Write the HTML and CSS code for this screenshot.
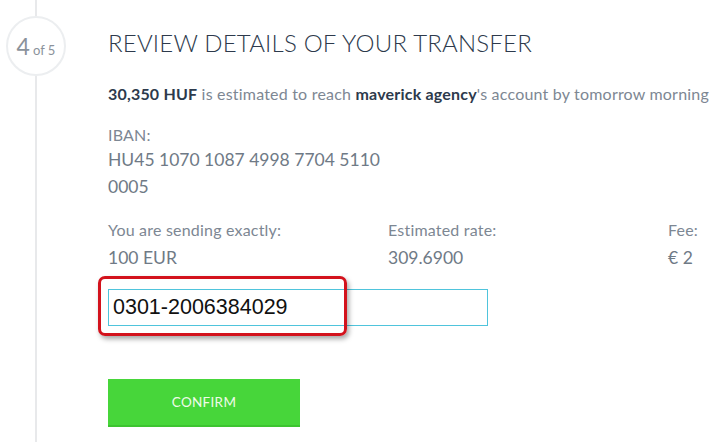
FILE: index.html
```html
<!DOCTYPE html>
<html lang="en">
<head>
    <meta charset="UTF-8">
    <meta name="viewport" content="width=device-width, initial-scale=1.0">
    <title>Review transfer</title>
    <link rel="stylesheet" href="styles.css">
</head>
<body>
    <div class="page">
        <aside class="rail">
            <div class="rail-line rail-top"></div>
            <div class="step"><span class="step-num">4</span><span class="step-of">of 5</span></div>
            <div class="rail-line rail-rest"></div>
        </aside>
        <main class="review">
            <h1>REVIEW DETAILS OF YOUR TRANSFER</h1>
            <p class="summary"><strong>30,350 HUF</strong> is estimated to reach <strong>maverick agency</strong>'s account by tomorrow morning</p>

            <div class="field iban">
                <div class="label">IBAN:</div>
                <div class="value">HU45 1070 1087 4998 7704 5110 0005</div>
            </div>

            <div class="figures">
                <div class="field">
                    <div class="label">You are sending exactly:</div>
                    <div class="value">100 EUR</div>
                </div>
                <div class="field">
                    <div class="label">Estimated rate:</div>
                    <div class="value">309.6900</div>
                </div>
                <div class="field">
                    <div class="label">Fee:</div>
                    <div class="value">€ 2</div>
                </div>
            </div>

            <div class="reference">
                <input class="ref-input" type="text" value="0301-2006384029">
                <div class="highlight"></div>
            </div>

            <button class="confirm">CONFIRM</button>
        </main>
    </div>
</body>
</html>
```

FILE: styles.css
```css
/* Global */
body {
    margin: 0;
    padding: 0;
    background: #fff;
    font-family: 'Lato', 'Liberation Sans', sans-serif;
    color: #7d8793;
    overflow: hidden;
}

.page {
    display: flex;
    height: 442px;
}

/* Step rail */
.rail {
    width: 74px;
    flex: none;
    display: flex;
    flex-direction: column;
    padding-left: 6px;
    box-sizing: border-box;
}

.rail-line {
    width: 2px;
    margin-left: 29px;
    background: #e8e9eb;
}

.rail-top {
    height: 16px;
}

.rail-rest {
    flex: 1;
}

.step {
    width: 60px;
    height: 60px;
    box-sizing: border-box;
    border: 2px solid #eceef0;
    border-radius: 50%;
    display: flex;
    align-items: baseline;
    justify-content: center;
    padding-top: 14px;
    color: #8b929b;
}

.step-num {
    font-size: 23px;
    margin-right: 3px;
}

.step-of {
    font-size: 13px;
}

/* Review block */
.review {
    margin-left: 34px;
    padding-top: 28px;
    white-space: nowrap;
}

.review h1 {
    margin: 0 0 27px;
    font-size: 24px;
    font-weight: 300;
    color: #2d3a4c;
    letter-spacing: 0.2px;
}

.summary {
    margin: 0 0 22px;
    font-size: 16px;
    letter-spacing: 0.2px;
}

.summary strong {
    color: #2d3a4c;
    font-weight: 700;
}

.field .label {
    font-size: 16px;
    letter-spacing: 0.2px;
    line-height: 20px;
    padding-bottom: 1px;
}

.field .value {
    font-size: 17.5px;
    line-height: 27px;
    color: #6f7a86;
}

.iban {
    margin-bottom: 20px;
}

.iban .value {
    width: 290px;
    white-space: normal;
}

.figures {
    display: grid;
    grid-template-columns: 280px 280px auto;
    margin-bottom: 18px;
}

.figures .label {
    padding-bottom: 4px;
}

/* Reference number */
.reference {
    position: relative;
    width: 380px;
}

.ref-input,
.ref-input:hover,
.ref-input:focus {
    -webkit-appearance: none;
    appearance: none;
    display: block;
    width: 380px;
    height: 37px;
    box-sizing: border-box;
    border: 1px solid #4fc4dc;
    padding: 0 4px;
    font-family: 'Liberation Sans', sans-serif;
    font-size: 21.5px;
    color: #111;
    background: #fff;
    outline: none;
    box-shadow: none;
}

.highlight {
    position: absolute;
    left: -10px;
    top: -13px;
    width: 249px;
    height: 60px;
    box-sizing: border-box;
    border: 3px solid #d3121c;
    border-radius: 7px;
    box-shadow: 2px 3px 5px rgba(0, 0, 0, 0.35);
}

/* Button */
.confirm {
    display: block;
    margin-top: 53px;
    width: 192px;
    height: 48px;
    border: none;
    border-bottom: 2px solid #3cc430;
    background: #47d63a;
    color: #effbe9;
    font-family: 'Lato', sans-serif;
    font-size: 13.5px;
    letter-spacing: 0.3px;
    cursor: pointer;
}
```
